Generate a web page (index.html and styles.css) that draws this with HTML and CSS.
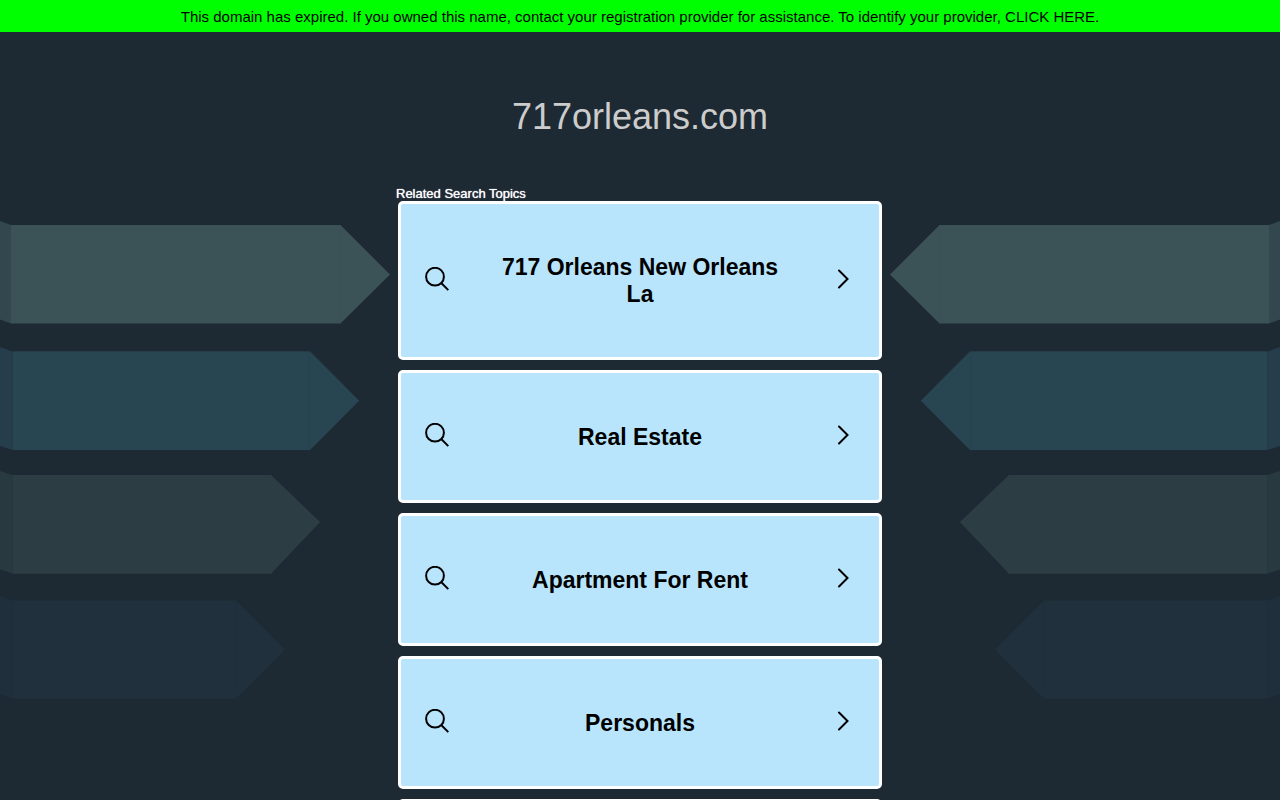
FILE: index.html
```html
<!DOCTYPE html>
<html lang="en">
<head>
<meta charset="utf-8">
<meta name="viewport" content="width=device-width, initial-scale=1">
<title>717orleans.com</title>
<link rel="stylesheet" href="styles.css">
</head>
<body>
<svg width="0" height="0" class="defs" aria-hidden="true">
  <symbol id="ribbons" viewBox="0 0 390 480">
    <path fill="#32474e" d="M0 1l11 4v98.500L0 99.500z"/>
    <path fill="#3b5357" d="M11 5h329.500L390 54.500l-49.500 49H11z"/>
    <path stroke="#385056" d="M340.500 5v98.500" fill="none"/>
    <path fill="#263d4b" d="M0 127l12.500 4.500V230L0 226z"/>
    <path fill="#284552" d="M12.500 131.200H310l49.200 49.500L310 230H12.500z"/>
    <path stroke="#26414e" d="M309.500 132v98" fill="none"/>
    <path fill="#28393f" d="M0 251l12.500 4v98.500L0 349.500z"/>
    <path fill="#2c3e44" d="M12.500 255H271l49 47-49 51.700H12.500z"/>
    <path fill="#1f2f3b" d="M0 376l12.500 4.500v98L0 474.500z"/>
    <path fill="#20313d" d="M12.500 380.500h223.500l49 49.200-49 48.800H12.500z"/>
    <path stroke="#1f2f3a" d="M235.500 381v97" fill="none"/>
  </symbol>
  <symbol id="search" viewBox="0 0 26 28">
    <g fill="none" stroke="#000" stroke-width="2">
      <circle cx="11" cy="9.700" r="8.900"/>
      <path d="M17.200 16l7.100 7.100"/>
    </g>
  </symbol>
  <symbol id="chevron" viewBox="0 0 12 24">
    <path d="M2 1.500l8.500 8.500-8.500 8.500" fill="none" stroke="#000" stroke-width="2" stroke-linecap="round"/>
  </symbol>
</svg>

<header class="banner">This domain has expired. If you owned this name, contact your registration provider for assistance. To identify your provider,&nbsp;<a href="#">CLICK HERE.</a></header>

<svg class="ribbons" aria-hidden="true"><use href="#ribbons"/></svg>
<svg class="ribbons ribbons-right" aria-hidden="true"><use href="#ribbons"/></svg>

<main class="content">
  <h1 class="domain">717orleans.com</h1>
  <h2 class="label">Related Search Topics</h2>
  <nav class="topics" aria-label="Related Search Topics">
    <a class="topic" href="#"><svg class="search"><use href="#search"/></svg><span class="name">717 Orleans New Orleans La</span><svg class="chevron"><use href="#chevron"/></svg></a>
    <a class="topic" href="#"><svg class="search"><use href="#search"/></svg><span class="name">Real Estate</span><svg class="chevron"><use href="#chevron"/></svg></a>
    <a class="topic" href="#"><svg class="search"><use href="#search"/></svg><span class="name">Apartment For Rent</span><svg class="chevron"><use href="#chevron"/></svg></a>
    <a class="topic" href="#"><svg class="search"><use href="#search"/></svg><span class="name">Personals</span><svg class="chevron"><use href="#chevron"/></svg></a>
    <a class="topic" href="#" aria-label="More topics"></a>
  </nav>
</main>
</body>
</html>
```
FILE: styles.css
```css
* { box-sizing: border-box; }
html { background: #1e2a33; }
body {
  position: relative;
  margin: 0;
  height: 100vh;
  overflow: hidden auto;
  font-family: "Liberation Sans", Arial, sans-serif;
  scrollbar-width: none;
}
.defs { position: absolute; }
.banner {
  display: flex;
  justify-content: center;
  padding: 9px 16px 7px;
  background: #0f0;
  color: #000;
  font-size: 15px;
  line-height: 16px;
}
.banner a { color: inherit; text-decoration: none; }
.ribbons {
  position: absolute;
  top: 220px;
  left: 0;
  width: 390px;
  height: 480px;
}
.ribbons-right {
  right: 0;
  left: auto;
  transform: scaleX(-1);
}
.content {
  position: relative;
  max-width: 484px;
  margin: 0 auto;
  padding-top: 64px;
}
.domain {
  margin: 0;
  color: #ccc;
  font-size: 36px;
  font-weight: 400;
  line-height: 42px;
  text-align: center;
}
.label {
  margin: 48px 0 0 -2px;
  color: #fff;
  font-size: 13px;
  font-weight: 400;
  line-height: 15px;
  text-shadow: 0 0 1px #fff;
}
.topics {
  display: flex;
  flex-direction: column;
  gap: 10px;
}
.topic {
  display: flex;
  align-items: center;
  min-height: 133px;
  padding: 50px 30px 49px 23px;
  border: 3px solid #fff;
  border-radius: 5px;
  background: #b8e5fc;
  color: #000;
  text-decoration: none;
}
.search { flex: none; width: 26px; height: 28px; }
.chevron { flex: none; width: 12px; height: 24px; }
.name {
  flex: 1;
  padding: 0 47px 0 40px;
  font-size: 23px;
  font-weight: 700;
  line-height: 27px;
  text-align: center;
}
```
